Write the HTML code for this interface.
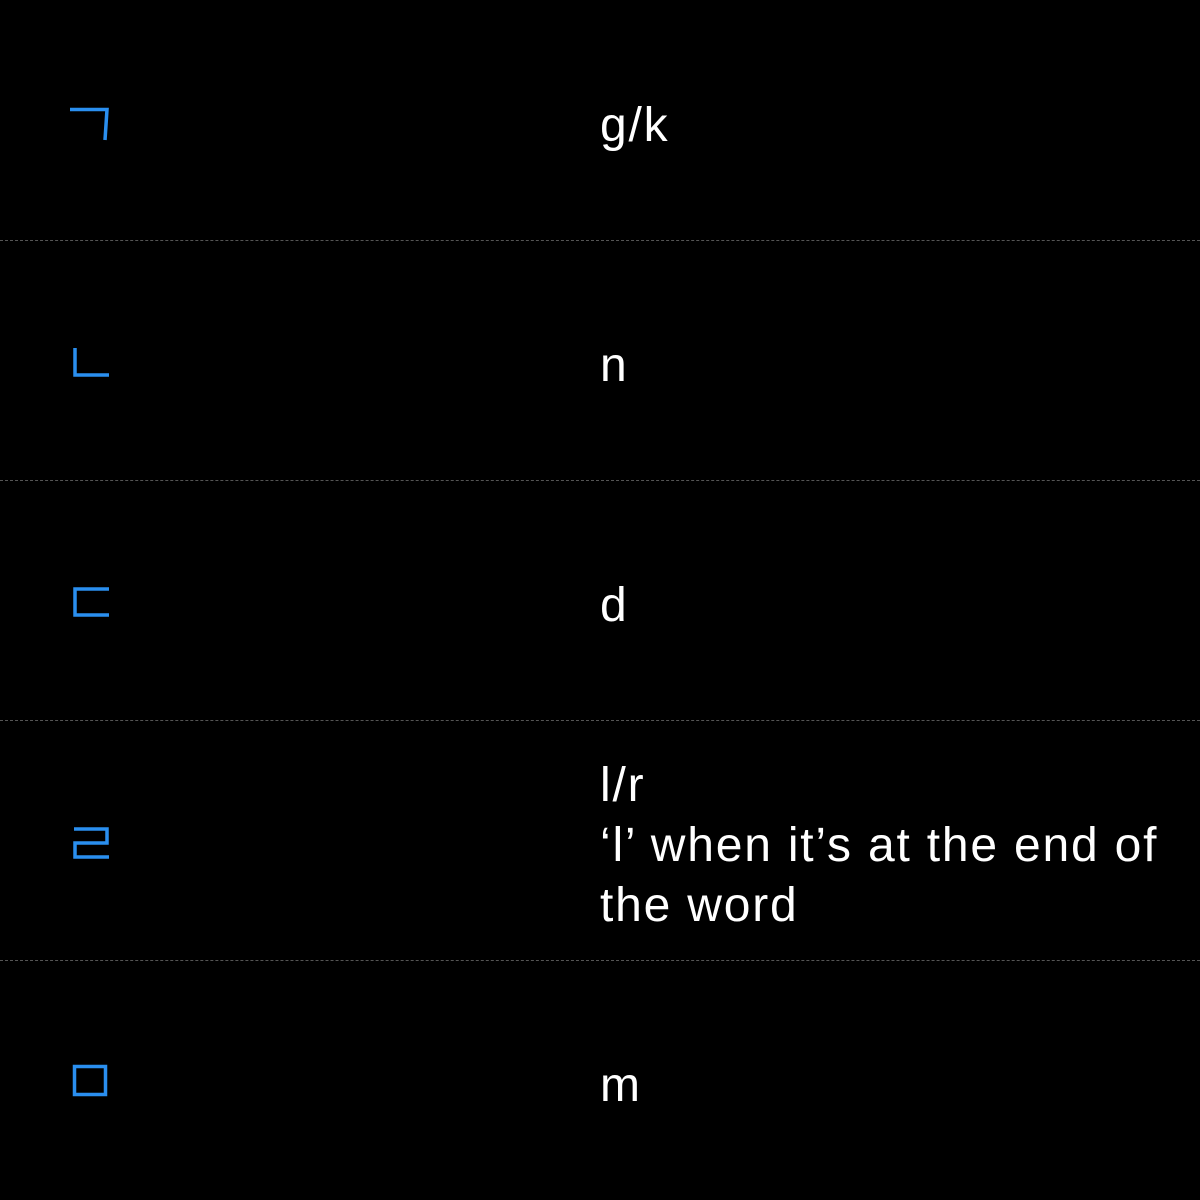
<!DOCTYPE html>
<html><head><meta charset="utf-8"><style>
html,body{margin:0;padding:0;background:#000;width:1200px;height:1200px;overflow:hidden}
.row{position:absolute;left:0;width:1200px;height:240px;display:flex;align-items:center}
.t{position:absolute;left:600px;font-family:"Liberation Sans",sans-serif;font-size:48px;letter-spacing:1.8px;line-height:60px;color:#fff;width:590px;margin-top:11px}
.sep{position:absolute;left:0;width:1200px;height:0;border-top:1px dashed #555}
svg{position:absolute;left:0;top:0}
</style></head><body>
<div class="row" style="top:0"><div class="t">g/k</div></div>
<div class="row" style="top:240px"><div class="t">n</div></div>
<div class="row" style="top:480px"><div class="t">d</div></div>
<div class="row" style="top:720px"><div class="t">l/r<br>‘l’ when it’s at the end of<br>the word</div></div>
<div class="row" style="top:960px"><div class="t">m</div></div>
<div class="sep" style="top:240px"></div>
<div class="sep" style="top:480px"></div>
<div class="sep" style="top:720px"></div>
<div class="sep" style="top:960px"></div>
<svg width="1200" height="1200" fill="none" stroke="#2a8ff0" stroke-width="3.5">
<path d="M70 109.5H107L105 140"/>
<path d="M75 348V375H109"/>
<path d="M109 589H75V615H109"/>
<path d="M74 829H107V843H75V857H109"/>
<rect x="74.5" y="1066.5" width="31" height="28"/>
</svg>
</body></html>
